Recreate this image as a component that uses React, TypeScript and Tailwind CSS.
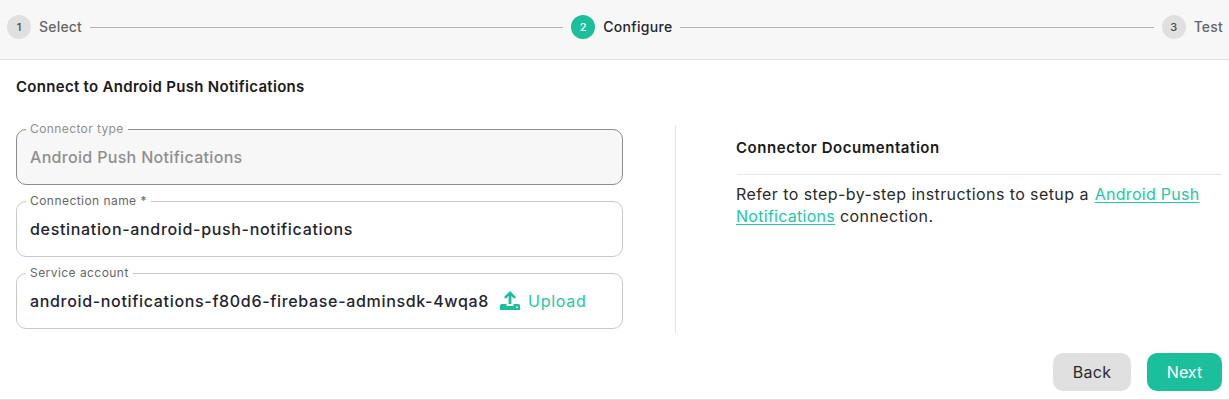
const font = "font-['Inter',sans-serif]";

const Step = ({ n, label, active, grow }: { n: number; label: string; active?: boolean; grow?: boolean }) => (
  <>
    <div className="flex items-center">
      <div
        className={
          active
            ? "flex h-6 w-6 items-center justify-center rounded-full bg-[#1bbf9c] text-[11px] font-medium text-white"
            : "flex h-6 w-6 items-center justify-center rounded-full bg-[#e0e0e0] text-[11px] font-medium text-[#4a4a4a]"
        }
      >
        {n}
      </div>
      <span
        className={
          active
            ? "ml-2 text-[14px] font-medium leading-6 tracking-[0.3px] text-[#1f2430]"
            : "ml-2 text-[14px] font-medium leading-6 tracking-[0.2px] text-[#666666]"
        }
      >
        {label}
      </span>
    </div>
    {grow && <div className="mx-2 mt-3 h-px flex-1 bg-[#b5b5b5]" />}
  </>
);

const Field = ({
  label,
  children,
  disabled,
}: {
  label: React.ReactNode;
  children: React.ReactNode;
  disabled?: boolean;
}) => (
  <fieldset
    className={
      disabled
        ? "h-[62px] rounded-[10px] border border-[#8c8c8c] bg-[#f7f7f7] px-[9px]"
        : "h-[62px] rounded-[10px] border border-[#c8c8c8] bg-white px-[9px]"
    }
  >
    <legend
      className={
        disabled
          ? "px-1 text-[12px] leading-[12px] tracking-[0.4px] text-[#8f8f8f]"
          : "px-1 text-[12px] leading-[12px] tracking-[0.45px] text-[#666666]"
      }
    >
      {label}
    </legend>
    <div className="flex h-[44px] items-center px-1">{children}</div>
  </fieldset>
);

export default function App() {
  return (
    <div className={`${font} flex h-[400px] w-[1229px] flex-col overflow-hidden border-b border-[#e0e0e0] bg-white`}>
      <div className="flex h-[60px] items-start border-b border-[#e0e0e0] bg-[#f7f7f7] pl-[7px] pr-[6px] pt-[15px]">
        <Step n={1} label="Select" grow />
        <Step n={2} label="Configure" active grow />
        <Step n={3} label="Test" />
      </div>

      <div className="flex flex-1 flex-col px-4">
        <h1 className="mt-[17px] text-[15px] font-semibold leading-[20px] tracking-[0.3px] text-[#1a1a1a]">
          Connect to Android Push Notifications
        </h1>

        <div className="mt-[26px] flex">
          <div className="flex w-[607px] shrink-0 flex-col gap-[10px]">
            <Field label="Connector type" disabled>
              <span className="text-[16px] font-[450] tracking-[0.32px] text-[#8f8f8f]">Android Push Notifications</span>
            </Field>
            <Field label="Connection name *">
              <span className="text-[16px] font-[450] tracking-[0.67px] text-[#1f2430]">destination-android-push-notifications</span>
            </Field>
            <Field label="Service account">
              <span className="text-[16px] font-[450] tracking-[0.67px] text-[#1f2430]">android-notifications-f80d6-firebase-adminsdk-4wqa8</span>
              <svg className="ml-[11px] h-5 w-5 shrink-0" viewBox="0 0 20 20" fill="#1bbf9c">
                <path d="M10 0 L16 6 L14.2 7.8 L11.4 5 V13 H8.6 V5 L5.8 7.8 L4 6 Z" />
                <path fillRule="evenodd" d="M0 14.5 Q0 13 1.5 13 H6.5 V15 H13.5 V13 H18.5 Q20 13 20 14.5 V19 H0 Z M16 15.5 H17.8 V17 H16 Z" />
              </svg>
              <span className="ml-2 text-[16px] tracking-[0.7px] text-[#20c9a6]">Upload</span>
            </Field>
          </div>

          <div className="ml-[52px] mt-[2px] h-[208px] w-px shrink-0 bg-[#e6e6e6]" />

          <div className="ml-[61px] w-[485px] shrink-0">
            <h2 className="mt-[14px] -ml-px text-[15px] font-semibold leading-[22px] tracking-[0.55px] text-[#1a1a1a]">
              Connector Documentation
            </h2>
            <div className="mt-[15px] border-t border-[#e6e6e6] pt-2">
              <p className="-ml-px text-[16px] leading-[22px] tracking-[0.42px] text-[#2a2a2a]">
                Refer to step-by-step instructions to setup a{" "}
                <a className="ml-[1px] tracking-[0.28px] text-[#20c9a6] underline underline-offset-2" href="#">
                  Android Push Notifications
                </a>{" "}
                connection.
              </p>
            </div>
          </div>
        </div>

        <div className="mt-auto mb-2 mr-[-9px] flex justify-end gap-4">
          <button className="h-[38px] w-[78px] rounded-[10px] bg-[#e0e0e0] text-[16px] tracking-[0.3px] text-[#2a2a2a]">Back</button>
          <button className="h-[38px] w-[75px] rounded-[10px] bg-[#1bbf9c] text-[16px] text-white">Next</button>
        </div>
      </div>
    </div>
  );
}
